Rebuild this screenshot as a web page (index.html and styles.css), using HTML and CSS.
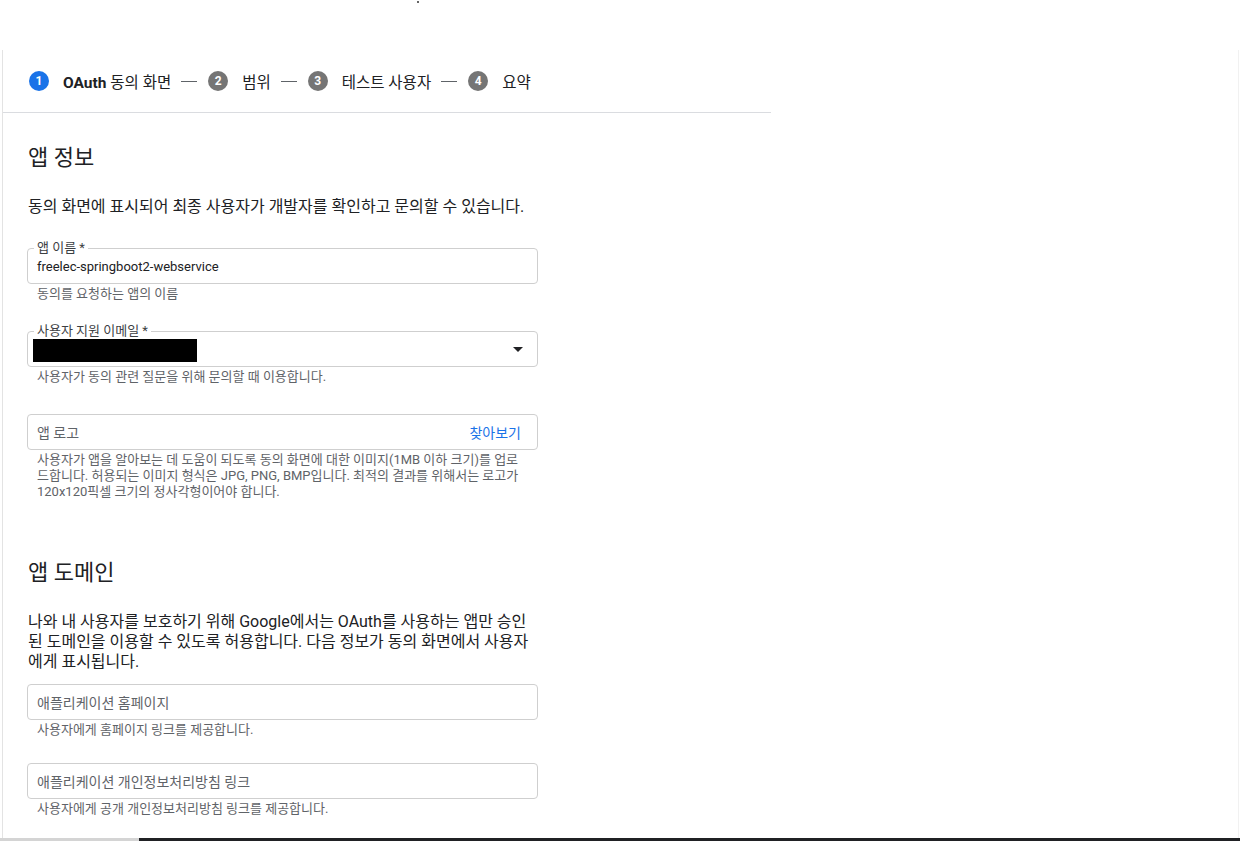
FILE: index.html
```html
<!DOCTYPE html>
<html lang="ko">
<head>
    <meta charset="UTF-8">
    <meta name="viewport" content="width=device-width, initial-scale=1.0">
    <title>OAuth 동의 화면</title>
    <link rel="stylesheet" href="styles.css">
</head>
<body>
    <div class="top-space"><span class="speck"></span></div>

    <div class="frame">
        <div class="panel">
            <div class="stepper">
                <div class="step active"><span class="step-num">1</span><span class="step-name"><b>OAuth</b> 동의 화면</span></div>
                <span class="step-sep"></span>
                <div class="step"><span class="step-num">2</span><span class="step-name">범위</span></div>
                <span class="step-sep"></span>
                <div class="step"><span class="step-num">3</span><span class="step-name">테스트 사용자</span></div>
                <span class="step-sep"></span>
                <div class="step"><span class="step-num">4</span><span class="step-name">요약</span></div>
            </div>

            <div class="content">
                <h2 class="section-title">앱 정보</h2>
                <p class="section-desc">동의 화면에 표시되어 최종 사용자가 개발자를 확인하고 문의할 수 있습니다.</p>

                <div class="field first">
                    <div class="field-box">
                        <span class="field-label">앱 이름 *</span>
                        <span class="field-value">freelec-springboot2-webservice</span>
                    </div>
                    <div class="field-hint">동의를 요청하는 앱의 이름</div>
                </div>

                <div class="field">
                    <div class="field-box select">
                        <span class="field-label">사용자 지원 이메일 *</span>
                        <span class="redacted"></span>
                        <span class="select-arrow"></span>
                    </div>
                    <div class="field-hint">사용자가 동의 관련 질문을 위해 문의할 때 이용합니다.</div>
                </div>

                <div class="field logo">
                    <div class="field-box">
                        <span class="field-placeholder">앱 로고</span>
                        <span class="browse-link">찾아보기</span>
                    </div>
                    <div class="field-hint">사용자가 앱을 알아보는 데 도움이 되도록 동의 화면에 대한 이미지(1MB 이하 크기)를 업로드합니다. 허용되는 이미지 형식은 JPG, PNG, BMP입니다. 최적의 결과를 위해서는 로고가 120x120픽셀 크기의 정사각형이어야 합니다.</div>
                </div>

                <h2 class="section-title second">앱 도메인</h2>
                <p class="section-desc long">나와 내 사용자를 보호하기 위해 Google에서는 OAuth를 사용하는 앱만 승인된 도메인을 이용할 수 있도록 허용합니다. 다음 정보가 동의 화면에서 사용자에게 표시됩니다.</p>

                <div class="field tight">
                    <div class="field-box">
                        <span class="field-placeholder">애플리케이션 홈페이지</span>
                    </div>
                    <div class="field-hint">사용자에게 홈페이지 링크를 제공합니다.</div>
                </div>

                <div class="field last">
                    <div class="field-box">
                        <span class="field-placeholder">애플리케이션 개인정보처리방침 링크</span>
                    </div>
                    <div class="field-hint">사용자에게 공개 개인정보처리방침 링크를 제공합니다.</div>
                </div>
            </div>
        </div>
    </div>

    <div class="bottom-bar">
        <div class="bar-track"></div>
        <div class="bar-thumb"></div>
    </div>
</body>
</html>
```

FILE: styles.css
```css
/* Reset */
* {
  margin: 0;
  padding: 0;
  box-sizing: border-box;
}

body {
  font-family: Roboto, "Noto Sans CJK KR", sans-serif;
  color: #202124;
  background-color: #fff;
  height: 841px;
  overflow: hidden;
  display: flex;
  flex-direction: column;
}

.top-space {
  height: 50px;
  flex-shrink: 0;
  position: relative;
}

.speck {
  position: absolute;
  left: 417px;
  top: 1px;
  width: 2px;
  height: 2px;
  background: #666;
}

.frame {
  flex: 1;
  width: 1237px;
  margin-left: 2px;
  border-left: 1px solid #e3e3e3;
  border-right: 1px solid #f1f1f1;
  overflow: hidden;
}

.panel {
  width: 768px;
}

/* Stepper */
.stepper {
  height: 63px;
  display: flex;
  align-items: center;
  padding-left: 26px;
  border-bottom: 1px solid #dadce0;
  font-size: 15.5px;
}

.step {
  display: flex;
  align-items: center;
  gap: 14px;
}

.step-num {
  width: 20px;
  height: 20px;
  border-radius: 50%;
  background: #757575;
  color: #fff;
  font-size: 12px;
  font-weight: bold;
  display: flex;
  align-items: center;
  justify-content: center;
}

.step.active .step-num {
  background: #1a73e8;
}

.step-name b {
  font-weight: bold;
}

.step-sep {
  width: 16px;
  height: 1px;
  background: #5f6368;
  margin: 0 11px 0 10px;
}

/* Form content */
.content {
  width: 535px;
  padding: 31px 0 0 24px;
}

.section-title {
  font-size: 22px;
  line-height: 28px;
  font-weight: normal;
  padding-left: 1px;
}

.section-title.second {
  margin-top: 59px;
}

.section-desc {
  font-size: 16px;
  line-height: 20px;
  margin-top: 25px;
  padding-left: 1px;
}

.field {
  margin-top: 29px;
}

.field.first {
  margin-top: 31px;
}

.field.tight {
  margin-top: 12px;
}

.field.last {
  margin-top: 25px;
}

.field-box {
  position: relative;
  height: 36px;
  border: 1px solid #cfcfcf;
  border-radius: 4px;
  display: flex;
  align-items: center;
  padding: 0 16px 0 9px;
  font-size: 13px;
}

.field-label {
  position: absolute;
  top: -8px;
  left: 6px;
  padding: 0 3px;
  background: #fff;
  font-size: 13px;
  line-height: 14px;
  color: #3c4043;
}

.field-value {
  color: #202124;
}

.field-placeholder {
  font-size: 14px;
  color: #5f6368;
}

.browse-link {
  margin-left: auto;
  font-size: 14px;
  color: #1a73e8;
}

.redacted {
  width: 164px;
  height: 23px;
  background: #000;
  margin-left: -4px;
  margin-top: 2px;
}

.select-arrow {
  margin-left: auto;
  margin-right: -2px;
  border-left: 5px solid transparent;
  border-right: 5px solid transparent;
  border-top: 5px solid #202124;
}

.field-hint {
  font-size: 13px;
  line-height: 16px;
  color: #5f6368;
  margin-top: 2px;
  padding: 0 8px 0 10px;
}

/* Bottom bar */
.bottom-bar {
  height: 3px;
  flex-shrink: 0;
  display: flex;
}

.bar-track {
  width: 139px;
  background: #d4d4d4;
}

.bar-thumb {
  flex: 1;
  background: #202124;
}
```
